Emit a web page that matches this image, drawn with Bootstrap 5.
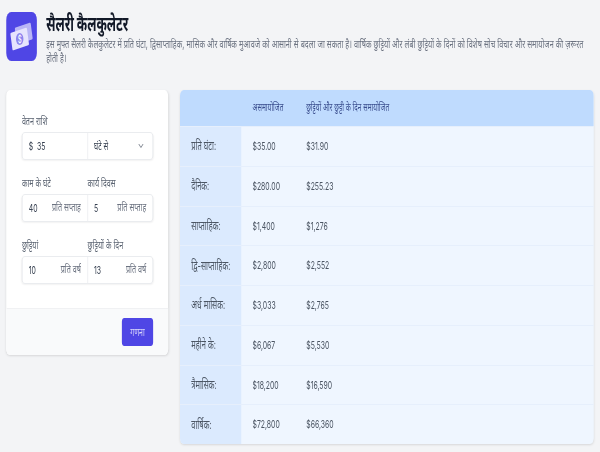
<!DOCTYPE html>
<html lang="hi"><head><meta charset="utf-8">
<link href="https://cdn.jsdelivr.net/npm/bootstrap@5.3.0/dist/css/bootstrap.min.css" rel="stylesheet">
<style>
html,body{height:452px;overflow:hidden}
body{background:#f3f4f6;font-family:Inter,"Noto Sans",sans-serif;font-size:12px;color:#4b5563}
.frame-clip{width:600px;height:452px;overflow:hidden}
.page-wrap{width:960px;height:452px;padding:12px 10px 0;transform:scaleX(.625);transform-origin:0 0}
.logo-box{width:49px;height:49px;background:#4f46e5;border-radius:8px;flex:none}
.page-title{font-size:20px;line-height:24px;font-weight:700;color:#111827;margin:0 0 1px}
.page-desc{font-size:11.6px;line-height:14px;color:#6b7280;margin:1px 0 0}
.head-text{padding-left:15px;width:880px}
.main-area{margin-top:25px;gap:19px;align-items:flex-start}
.form-panel{width:259px;flex:none;background:#fff;border-radius:6px;box-shadow:0 1px 3px rgba(0,0,0,.12)}
.form-body{padding:24px 24px 24px 25px}
.field-label{display:block;font-size:11.5px;line-height:14px;color:#5b6472;margin-bottom:4px}
.label-pair{display:flex}
.label-pair span{width:105px}
.input-pair{display:flex;height:28px;border:1px solid #e5e7eb;border-radius:5px;box-shadow:0 1px 2px rgba(0,0,0,.05);margin-bottom:16px;align-items:stretch}
.input-pair:last-child{margin-bottom:0}
.input-half{flex:1;display:flex;align-items:center;justify-content:space-between;padding:0 10px;font-size:11px;color:#374151}
.input-half+.input-half{border-left:1px solid #e5e7eb}
.unit-text{color:#6b7280;font-size:11.5px}
.form-foot{background:#f9fafb;border-top:1px solid #f0f1f3;border-radius:0 0 6px 6px;padding:9px 24px 0;height:47px;display:flex;justify-content:flex-end}
.calc-btn{width:50px;height:28px;background:#4f46e5;border-radius:4px;color:#d8d6fb;font-size:11px;display:flex;align-items:center;justify-content:center;padding:0;border:0}
.result-panel{width:662px;flex:none;border-radius:6px;overflow:hidden;box-shadow:0 1px 3px rgba(0,0,0,.12);background:#eff6ff}
.result-row{display:flex;height:39.75px;border-top:1px solid #e6effc;align-items:stretch}
.result-head{height:36px;background:#bfdbfe;border:0;color:#3b4f8f;font-size:10.5px}
.col-name{width:98px;flex:none;background:#dbeafe;padding-left:18px;display:flex;align-items:center;color:#4b5563}
.result-head .col-name{background:transparent}
.col-one{width:104px;flex:none;padding-left:18px;display:flex;align-items:center;font-size:11px}
.col-two{flex:1;display:flex;align-items:center;font-size:11px}
.result-head .col-one,.result-head .col-two{font-size:10.5px}
</style></head>
<body>
<div class="frame-clip">
<div class="page-wrap">
<div class="d-flex">
<div class="logo-box d-flex align-items-center justify-content-center">
<svg width="40" height="40" viewBox="0 0 40 40"><rect x="10" y="8" width="26" height="17" rx="1.5" transform="rotate(-12 23 16.5)" fill="#b9b5f6"/><rect x="3" y="13" width="27" height="18" rx="1.5" transform="rotate(-12 16.5 22)" fill="#e6e4fd"/><circle cx="16.5" cy="22" r="6" fill="#8d86ef"/><text x="16.5" y="25.6" font-size="10" text-anchor="middle" fill="#fff" font-family="Inter">$</text></svg>
</div>
<div class="head-text">
<h1 class="page-title">सैलरी कैलकुलेटर</h1>
<p class="page-desc">इस मुफ्त सैलरी कैलकुलेटर में प्रति घंटा, द्विसाप्ताहिक, मासिक और वार्षिक मुआवजे को आसानी से बदला जा सकता है। वार्षिक छुट्टियों और लंबी छुट्टियों के दिनों को विशेष सोच विचार और समायोजन की ज़रूरत होती है।</p>
</div>
</div>
<div class="d-flex main-area">
<div class="form-panel">
<div class="form-body">
<span class="field-label">वेतन राशि</span>
<div class="input-pair"><div class="input-half"><span>$&nbsp; 35</span></div><div class="input-half"><span>घंटे से</span><svg width="9" height="6" viewBox="0 0 9 6" class="me-1"><path d="M1 1l3.5 3.5L8 1" fill="none" stroke="#6b7280" stroke-width="1"/></svg></div></div>
<div class="label-pair field-label"><span>काम के घंटे</span><span>कार्य दिवस</span></div>
<div class="input-pair"><div class="input-half"><span>40</span><span class="unit-text">प्रति सप्ताह</span></div><div class="input-half"><span>5</span><span class="unit-text">प्रति सप्ताह</span></div></div>
<div class="label-pair field-label"><span>छुट्टियां</span><span>छुट्टियों के दिन</span></div>
<div class="input-pair"><div class="input-half"><span>10</span><span class="unit-text">प्रति वर्ष</span></div><div class="input-half"><span>13</span><span class="unit-text">प्रति वर्ष</span></div></div>
</div>
<div class="form-foot"><button class="btn calc-btn">गणना</button></div>
</div>
<div class="result-panel">
<div class="result-row result-head"><div class="col-name"></div><div class="col-one">असमायोजित</div><div class="col-two">छुट्टियों और छुट्टी के दिन समायोजित</div></div>
<div class="result-row"><div class="col-name">प्रति घंटा:</div><div class="col-one">$35.00</div><div class="col-two">$31.90</div></div>
<div class="result-row"><div class="col-name">दैनिक:</div><div class="col-one">$280.00</div><div class="col-two">$255.23</div></div>
<div class="result-row"><div class="col-name">साप्ताहिक:</div><div class="col-one">$1,400</div><div class="col-two">$1,276</div></div>
<div class="result-row"><div class="col-name">द्वि-साप्ताहिक:</div><div class="col-one">$2,800</div><div class="col-two">$2,552</div></div>
<div class="result-row"><div class="col-name">अर्ध मासिक:</div><div class="col-one">$3,033</div><div class="col-two">$2,765</div></div>
<div class="result-row"><div class="col-name">महीने के:</div><div class="col-one">$6,067</div><div class="col-two">$5,530</div></div>
<div class="result-row"><div class="col-name">त्रैमासिक:</div><div class="col-one">$18,200</div><div class="col-two">$16,590</div></div>
<div class="result-row"><div class="col-name">वार्षिक:</div><div class="col-one">$72,800</div><div class="col-two">$66,360</div></div>
</div>
</div>
</div>
</div>
</body></html>
